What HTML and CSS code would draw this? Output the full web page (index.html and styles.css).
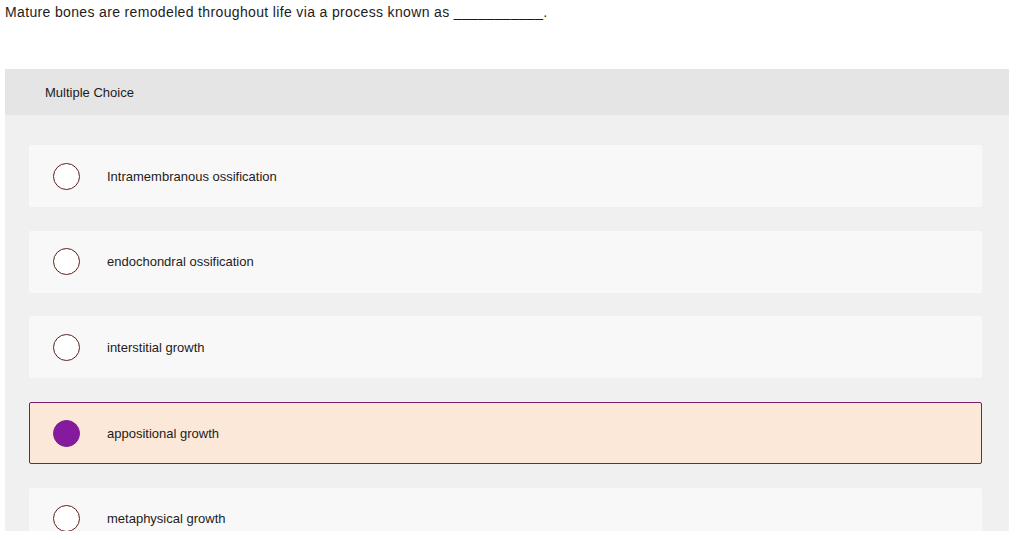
FILE: index.html
```html
<!DOCTYPE html>
<html>
<head>
<meta charset="utf-8">
<link rel="stylesheet" href="styles.css">
</head>
<body>
<p class="question">Mature bones are remodeled throughout life via a process known as ___________.</p>
<section class="mc">
  <div class="mc-head">Multiple Choice</div>
  <div class="mc-body">
    <label class="opt"><span class="radio"></span><span class="opt-text">Intramembranous ossification</span></label>
    <label class="opt"><span class="radio"></span><span class="opt-text">endochondral ossification</span></label>
    <label class="opt"><span class="radio"></span><span class="opt-text">interstitial growth</span></label>
    <label class="opt selected"><span class="radio"></span><span class="opt-text">appositional growth</span></label>
    <label class="opt"><span class="radio"></span><span class="opt-text">metaphysical growth</span></label>
  </div>
</section>
</body>
</html>
```

FILE: styles.css
```css
html, body {
  margin: 0;
  padding: 0;
  background: #ffffff;
  height: 540px;
  overflow: hidden;
}
body {
  font-family: "Liberation Sans", Arial, sans-serif;
  color: #1c1c1c;
}
.question {
  margin: 0;
  padding: 3px 5px 0 5px;
  font-size: 14px;
  letter-spacing: 0.35px;
  line-height: 18px;
  height: 66px;
  box-sizing: border-box;
}
.mc {
  margin: 3px 15px 0 5px;
  height: 462px;
  background: #f0f0f0;
  display: flex;
  flex-direction: column;
  overflow: hidden;
}
.mc-head {
  height: 46px;
  flex: none;
  background: #e5e5e5;
  display: flex;
  align-items: center;
  padding-left: 40px;
  font-size: 13px;
}
.mc-body {
  padding: 30px 27px 0 24px;
  display: flex;
  flex-direction: column;
  gap: 23.7px;
}
.opt {
  flex: none;
  height: 62px;
  box-sizing: border-box;
  background: #f8f8f8;
  border-radius: 2px;
  display: flex;
  align-items: center;
  padding-left: 24px;
  font-size: 13px;
}
.opt.selected {
  background: #fbe8d8;
  border: 1px solid #7b1d62;
  padding-left: 23px;
}
.radio {
  width: 27px;
  height: 27px;
  box-sizing: border-box;
  border-radius: 50%;
  border: 1.5px solid #5e1f1f;
  background: #ffffff;
  flex: none;
}
.opt.selected .radio {
  background: #861a9e;
  border-color: #7a1c8e;
}
.opt-text {
  margin-left: 27px;
}
```
